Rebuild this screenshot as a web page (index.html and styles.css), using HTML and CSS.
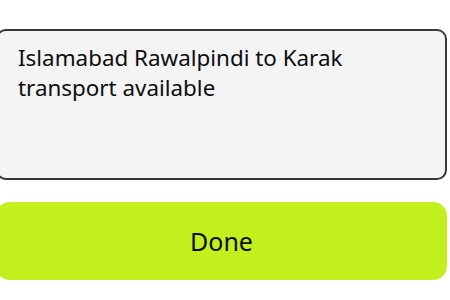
FILE: index.html
```html
<!DOCTYPE html>
<html>
<head>
<meta charset="utf-8">
<link rel="stylesheet" href="styles.css">
</head>
<body>
<div class="page">
  <div class="textbox">Islamabad Rawalpindi to Karak transport available</div>
  <button class="done">Done</button>
</div>
</body>
</html>
```
FILE: styles.css
```css
html, body {
  margin: 0;
  padding: 0;
  background: #ffffff;
  width: 450px;
  height: 300px;
  overflow: hidden;
}
.page {
  display: flex;
  flex-direction: column;
  gap: 22px;
  padding: 29px 3px 0 0;
  margin-left: -4px;
  font-family: "Noto Sans", "Open Sans", sans-serif;
}
.textbox {
  box-sizing: border-box;
  height: 151px;
  border: 2px solid #383838;
  border-radius: 10px;
  background: #f4f4f4;
  padding: 12px 20px;
  font-size: 22.4px;
  line-height: 30px;
  color: #0d0d0d;
}
.done {
  box-sizing: border-box;
  height: 78px;
  border: none;
  border-radius: 14px;
  background: #c2f01c;
  color: #0d0d0d;
  font-family: "Noto Sans", "Open Sans", sans-serif;
  font-size: 25px;
  padding: 0;
}
```
